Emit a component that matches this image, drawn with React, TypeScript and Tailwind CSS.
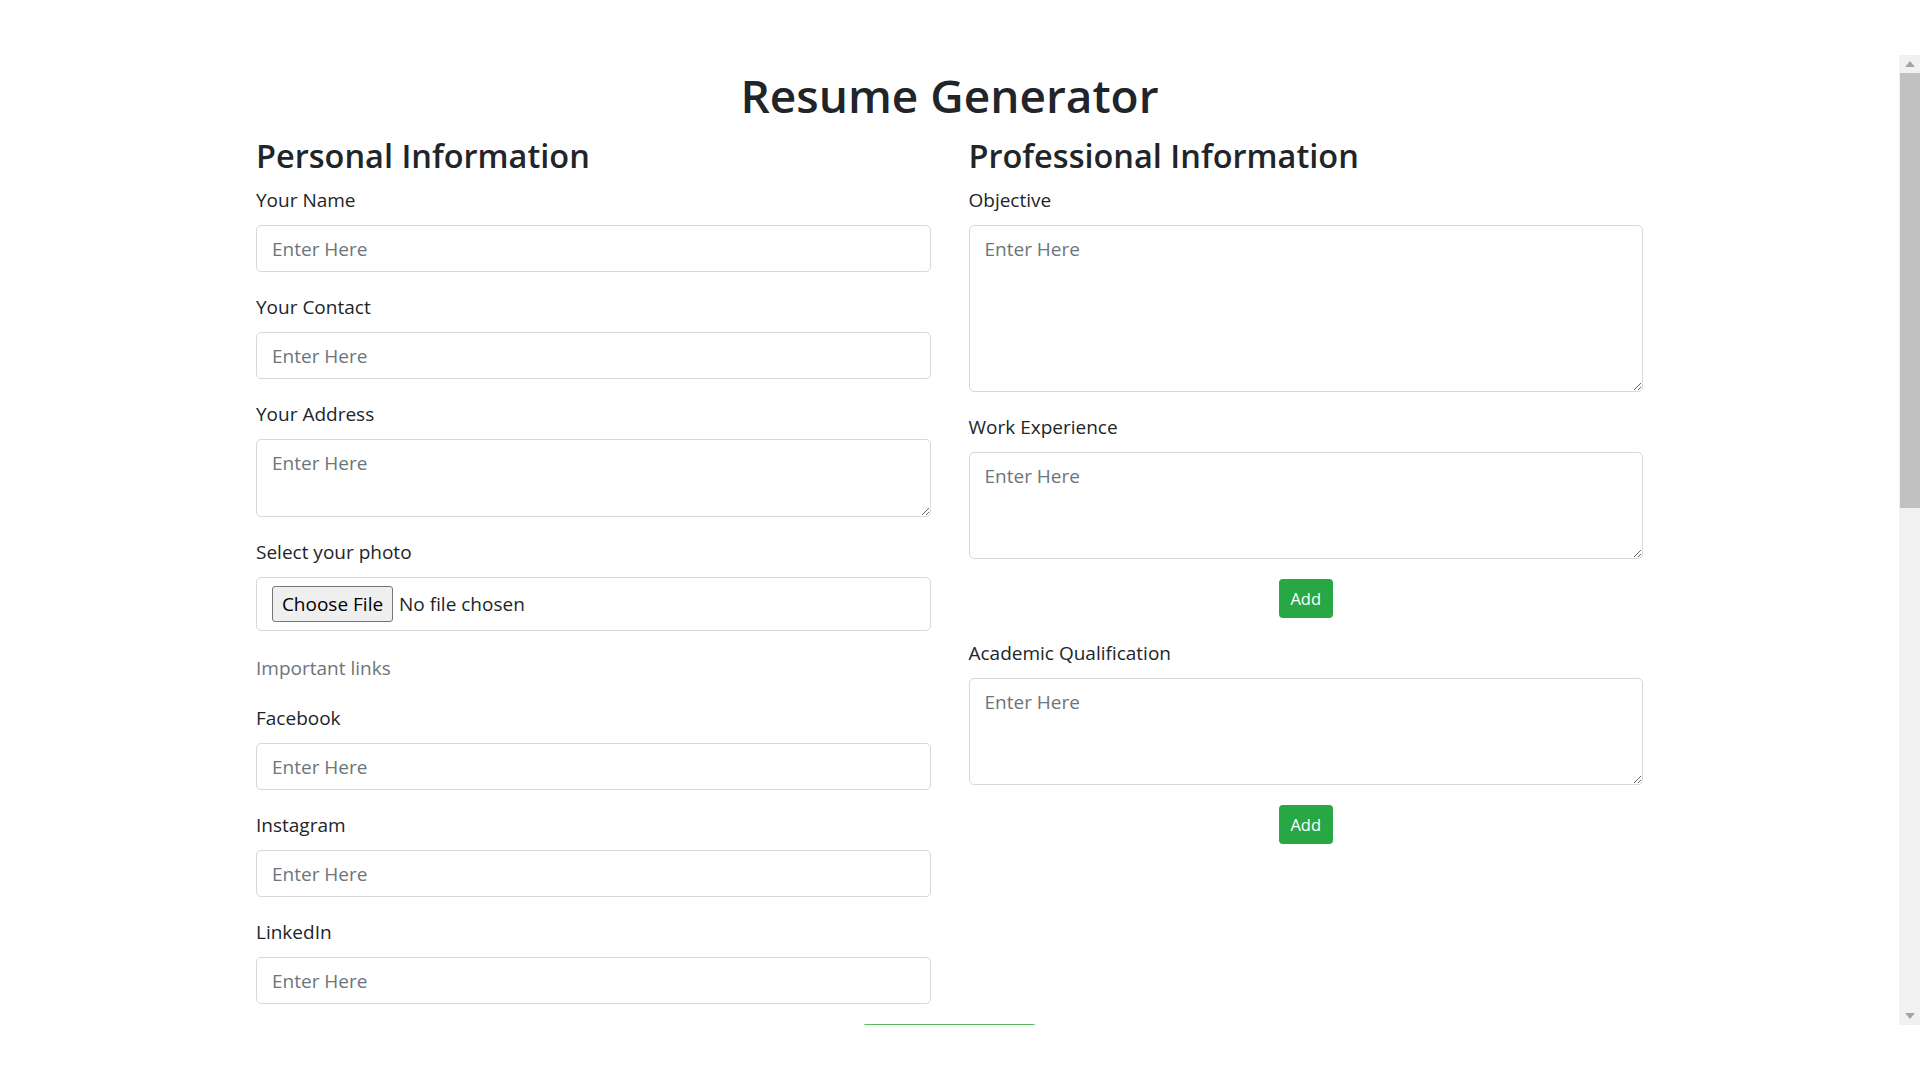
import React from "react";

function Label({ children }: { children: React.ReactNode }) {
  return <label className="mb-[10px] block text-[19px] leading-[30px] text-[#212529]">{children}</label>;
}

const inputCls =
  "block h-[47px] w-full rounded-[5px] border border-[#d3d9df] bg-white px-[15px] text-[19px] leading-[30px] text-[#495057] outline-none placeholder:text-[#6c757d]";

function TextField({ label, last }: { label: string; last?: boolean }) {
  return (
    <div className={last ? "" : "mb-[20px]"}>
      <Label>{label}</Label>
      <input type="text" placeholder="Enter Here" className={inputCls} />
    </div>
  );
}

function AreaField({ label, h, last }: { label: string; h: string; last?: boolean }) {
  return (
    <div className={last ? "" : "mb-[20px]"}>
      <Label>{label}</Label>
      <textarea
        placeholder="Enter Here"
        className={`block w-full rounded-[5px] border border-[#d3d9df] bg-white px-[15px] py-[8px] text-[19px] leading-[30px] text-[#495057] outline-none placeholder:text-[#6c757d] ${h}`}
      />
    </div>
  );
}

function AddButton() {
  return (
    <div className="flex justify-center">
      <button className="h-[39px] w-[54px] rounded-[4px] bg-[#28a745] text-[16.5px] leading-[26px] text-white">
        Add
      </button>
    </div>
  );
}

export default function App() {
  return (
    <div className="h-[1080px] w-[1920px] overflow-hidden bg-white font-['Open_Sans',sans-serif] text-[#212529]">
      <div className="flex h-[1025px]">
        <div className="h-[1025px] w-[1899px] overflow-hidden pt-[65px]">
          <h1 className="text-center text-[46px] font-[550] leading-[60px]">Resume Generator</h1>
          <div className="mx-auto mt-[9px] grid w-[1387px] grid-cols-2 gap-x-[38px]">
            <div>
              <h2 className="mb-[7px] text-[32.5px] font-[550] leading-[44px]">Personal Information</h2>
              <TextField label="Your Name" />
              <TextField label="Your Contact" />
              <AreaField label="Your Address" h="h-[78px]" />
              <div className="mb-[22px]">
                <Label>Select your photo</Label>
                <div className="flex h-[54px] items-center rounded-[5px] border border-[#d3d9df] px-[15px]">
                  <span className="flex h-[36px] w-[121px] items-center justify-center rounded-[3px] border border-[#767676] bg-[#efefef] text-[19px] text-black">
                    Choose File
                  </span>
                  <span className="ml-[6px] text-[19px] text-[#212529]">No file chosen</span>
                </div>
              </div>
              <p className="mb-[20px] text-[19px] leading-[30px] text-[#6c757d]">Important links</p>
              <TextField label="Facebook" />
              <TextField label="Instagram" />
              <TextField label="LinkedIn" last />
            </div>
            <div>
              <h2 className="mb-[7px] text-[32.5px] font-[550] leading-[44px]">Professional Information</h2>
              <AreaField label="Objective" h="h-[167px]" />
              <AreaField label="Work Experience" h="h-[107px]" />
              <div className="mb-[20px]">
                <AddButton />
              </div>
              <AreaField label="Academic Qualification" h="h-[107px]" />
              <AddButton />
            </div>
          </div>
          <div className="mt-[20px] flex justify-center">
            <div className="h-[40px] w-[175px] rounded-[4px] border border-[#5cb85c] bg-[#28a745]" />
          </div>
        </div>
        <div className="mt-[55px] flex h-[970px] w-[21px] flex-col bg-[#f1f1f1]">
          <div className="flex h-[18px] items-center justify-center">
            <svg width="10" height="6" viewBox="0 0 10 6">
              <polygon points="5,0 10,6 0,6" fill="#a3a3a3" />
            </svg>
          </div>
          <div className="ml-[1px] h-[435px] bg-[#c1c1c1]" />
          <div className="flex-1" />
          <div className="flex h-[18px] items-center justify-center">
            <svg width="10" height="6" viewBox="0 0 10 6">
              <polygon points="0,0 10,0 5,6" fill="#a3a3a3" />
            </svg>
          </div>
        </div>
      </div>
    </div>
  );
}
